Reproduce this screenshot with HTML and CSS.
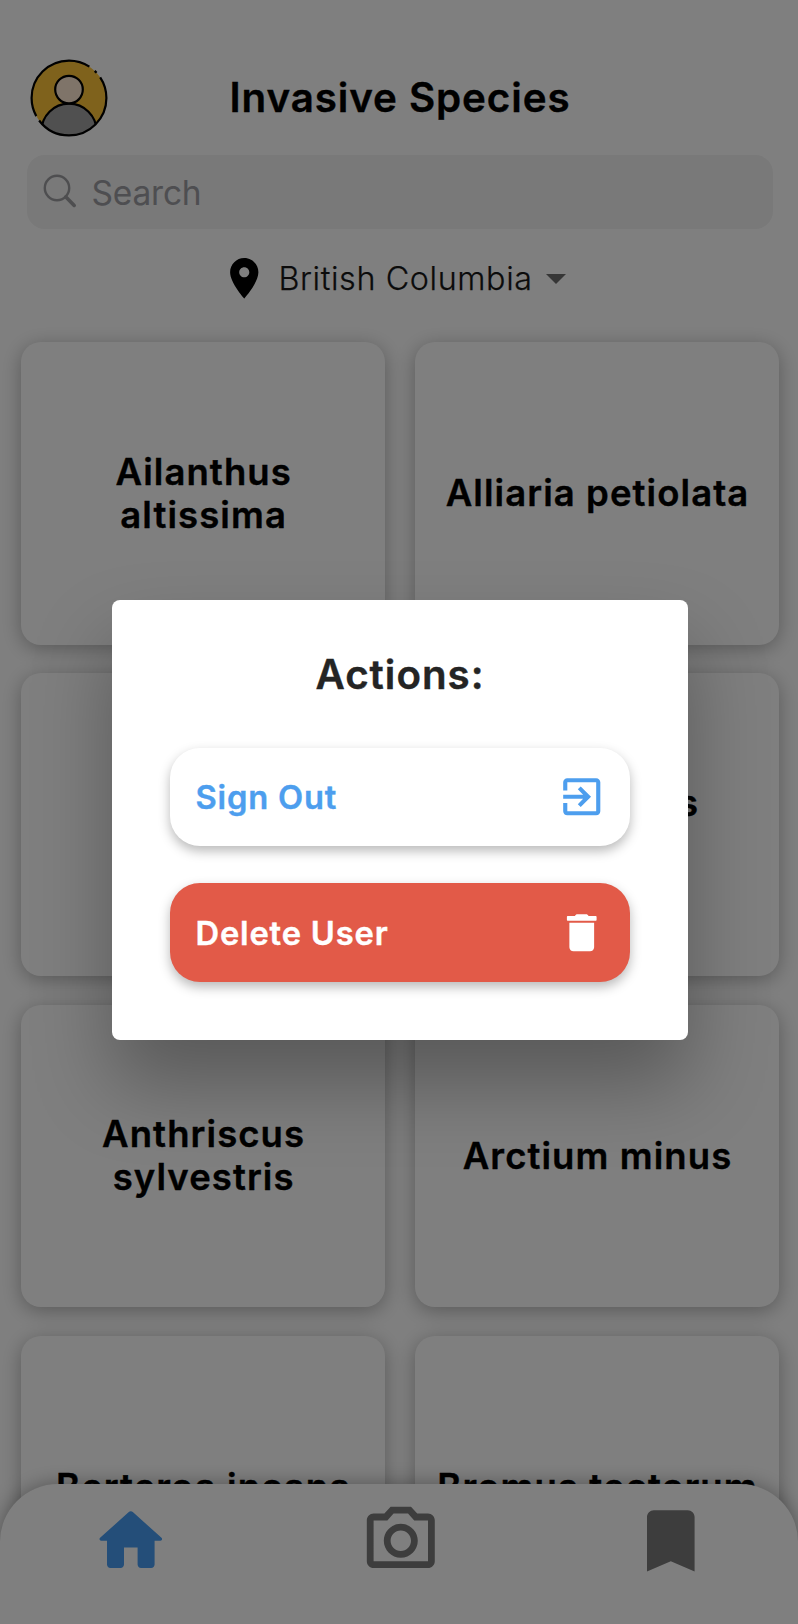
FILE: index.html
```html
<!DOCTYPE html>
<html lang="en">
<head>
<meta charset="utf-8">
<title>Invasive Species</title>
<link rel="stylesheet" href="styles.css">
</head>
<body>
<div class="app">
  <header class="header">
    <svg class="avatar" viewBox="0 0 80 80">
      <defs><clipPath id="face"><circle cx="40" cy="40" r="37.4"/></clipPath></defs>
      <circle cx="40" cy="40" r="37.4" fill="#ffc438"/>
      <g clip-path="url(#face)"><circle cx="40" cy="73.3" r="27.6" fill="#a0a0a0" stroke="#000" stroke-width="2.2"/></g>
      <circle cx="40" cy="31.6" r="13.800" fill="#ffe9d2" stroke="#000" stroke-width="2.2"/>
      <circle cx="40" cy="40" r="37.4" fill="none" stroke="#000" stroke-width="2.2" pathLength="360" stroke-dasharray="143 8 152 10.5 4 9 33.5 0"/>
    </svg>
    <h1 class="title">Invasive Species</h1>
  </header>
  <div class="search">
    <svg class="search-icon" viewBox="0 0 34 34" fill="none" stroke="#9c9da0" stroke-linecap="round"><circle cx="14" cy="14" r="12.2" stroke-width="2.4"/><path d="M22.9 22.9L31.2 31.4" stroke-width="3.6"/></svg>
    <span class="placeholder">Search</span>
  </div>
  <div class="region">
    <svg class="pin" viewBox="0 0 24 24"><path d="M12 2C8.13 2 5 5.13 5 9c0 5.25 7 13 7 13s7-7.75 7-13c0-3.87-3.13-7-7-7zm0 9.5c-1.38 0-2.5-1.12-2.5-2.5s1.12-2.5 2.5-2.5 2.5 1.12 2.5 2.5-1.12 2.5-2.5 2.5z"/></svg>
    <span class="region-name">British Columbia</span>
    <svg class="caret" viewBox="0 0 24 24"><path d="M7 10l5 5 5-5z" fill="#6c6c6c"/></svg>
  </div>
  <main class="grid">
    <div class="card">Ailanthus<br>altissima</div>
    <div class="card">Alliaria petiolata</div>
    <div class="card"></div>
    <div class="card">Anthriscus<br>caucalis</div>
    <div class="card">Anthriscus<br>sylvestris</div>
    <div class="card">Arctium minus</div>
    <div class="card">Berteroa incana</div>
    <div class="card">Bromus tectorum</div>
  </main>
  <nav class="nav">
    <svg class="nav-icon active" viewBox="0 0 24 24"><path d="M10 19v-5h4v5c0 .55.45 1 1 1h3c.55 0 1-.45 1-1v-7h1.7c.46 0 .68-.57.33-.87L12.67 3.6c-.38-.34-.96-.34-1.34 0l-8.36 7.53c-.34.3-.13.87.33.87H5v7c0 .55.45 1 1 1h3c.55 0 1-.45 1-1z"/></svg>
    <svg class="nav-icon" viewBox="0 0 24 24"><path d="M14.12 4l1.83 2H20v12H4V6h4.05l1.83-2h4.24M15 2H9L7.17 4H4c-1.1 0-2 .9-2 2v12c0 1.1.9 2 2 2h16c1.1 0 2-.9 2-2V6c0-1.1-.9-2-2-2h-3.17L15 2zm-3 7c1.65 0 3 1.35 3 3s-1.35 3-3 3-3-1.35-3-3 1.35-3 3-3m0-2c-2.76 0-5 2.24-5 5s2.24 5 5 5 5-2.24 5-5-2.24-5-5-5z"/></svg>
    <svg class="nav-icon" viewBox="0 0 24 24"><path d="M17 3H7c-1.1 0-2 .9-2 2v16l7-3 7 3V5c0-1.1-.9-2-2-2z"/></svg>
  </nav>
</div>
<div class="scrim">
  <section class="dialog">
    <h2 class="dialog-title">Actions:</h2>
    <button class="action sign-out"><span>Sign Out</span>
      <svg class="action-icon" viewBox="0 0 24 24"><path d="M10.09 15.59L11.5 17l5-5-5-5-1.41 1.41L12.67 11H3v2h9.67l-2.58 2.59zM19 3H5c-1.11 0-2 .9-2 2v4h2V5h14v14H5v-4H3v4c0 1.1.89 2 2 2h14c1.1 0 2-.9 2-2V5c0-1.1-.9-2-2-2z"/></svg>
    </button>
    <button class="action delete"><span>Delete User</span>
      <svg class="action-icon" viewBox="0 0 24 24"><path d="M6 7.1h12V19c0 1.1-.9 2-2 2H8c-1.1 0-2-.9-2-2zM5.3 3.9h3.4c.3-.7.6-.9 1.300-.9h4c.7 0 1 .2 1.300.9h3.400c.3 0 .5.2.5.5v1.300c0 .3-.2.5-.5.5H5.300c-.3 0-.5-.2-.5-.5V4.400c0-.3.2-.5.5-.5z"/></svg>
    </button>
  </section>
</div>
</body>
</html>
```
FILE: styles.css
```css
* { box-sizing: border-box; }
html, body { margin: 0; height: 1624px; overflow: hidden; }
body { font-family: Inter, "Liberation Sans", sans-serif; background: #fff; color: #000; }
svg { display: block; flex: none; }
.app { width: 798px; height: 1624px; display: flex; flex-direction: column; overflow: hidden; }
.header { display: grid; grid-template-columns: 80px 1fr 80px; align-items: center; padding: 57.500px 27px 0 29px; height: 155px; align-content: start; }
.avatar { width: 80px; height: 80px; }
.title { margin: 0; text-align: center; font-size: 40.300px; line-height: 48px; font-weight: 600; -webkit-text-stroke: .4px; letter-spacing: .92px; }
.search { margin: 0 25px 0 27px; height: 74px; border-radius: 18px; background: #f2f2f2; display: flex; align-items: center; padding-left: 15.500px; gap: 15px; flex: none; }
.search-icon { width: 34px; height: 34px; margin-bottom: 2px; }
.placeholder { padding-top: 1px; font-size: 33.500px; line-height: 40px; font-weight: 400; letter-spacing: -.2px; color: #9c9da2; }
.region { height: 113px; flex: none; display: flex; align-items: center; padding: 0 0 14.500px 220px; }
.pin { width: 48.500px; height: 48.500px; }
.region-name { padding-top: 2px; margin-left: 10px; width: 253.700px; white-space: nowrap; font-size: 32.300px; line-height: 40px; font-weight: 300; -webkit-text-stroke: .25px; letter-spacing: .6px; color: #161616; }
.caret { width: 48px; height: 48px; }
.grid { flex: 1; min-height: 0; display: grid; grid-template-columns: 364.700px 364.700px; grid-auto-rows: 302.500px; gap: 28.800px 29.200px; padding-left: 20.800px; }
.card { border-radius: 20px; background: #fff; box-shadow: 0 4px 20px rgba(0,0,0,.3); display: flex; align-items: center; justify-content: center; text-align: center; font-size: 36.500px; line-height: 43.200px; font-weight: 600; -webkit-text-stroke: .4px; letter-spacing: 1.080px; white-space: nowrap; padding: 1px 0 0 1px; }
.nav { position: relative; z-index: 1; height: 140px; flex: none; border-radius: 58px 58px 0 0; background: #fff; box-shadow: 0 0 20px rgba(0,0,0,.35); display: flex; justify-content: space-between; align-items: flex-start; padding: 16.300px 86.800px 0 90.300px; }
.nav-icon { width: 81.600px; height: 81.600px; fill: #7b7b7b; }
.nav-icon.active { fill: #489df2; }
.scrim { position: absolute; z-index: 2; inset: 0; width: 798px; height: 1624px; background: rgba(0,0,0,.5); display: flex; justify-content: center; align-items: flex-start; padding: 599.500px 0 0 2px; }
.dialog { width: 576px; height: 440.500px; background: #fff; border-radius: 8px; padding: 51px 58px 0; display: flex; flex-direction: column; box-shadow: 0 44px 80px rgba(0,0,0,.3); }
.dialog-title { margin: 0 0 49px; text-align: center; font-size: 40.300px; line-height: 48px; font-weight: 600; -webkit-text-stroke: .4px; letter-spacing: 1px; color: #242424; }
.action { height: 98.500px; margin-bottom: 37px; flex: none; border: 0; border-radius: 30px; padding: .5px 24px 0 25.500px; display: flex; align-items: center; justify-content: space-between; font: 600 32.700px/40px Inter, "Liberation Sans", sans-serif; -webkit-text-stroke: .4px; letter-spacing: .82px; box-shadow: 0 5px 12px rgba(0,0,0,.28); }
.action-icon { width: 49.500px; height: 49.500px; fill: currentColor; }
.sign-out { background: #fff; color: #4d9eee; }
.delete { background: #e25a48; color: #fff; }
```
